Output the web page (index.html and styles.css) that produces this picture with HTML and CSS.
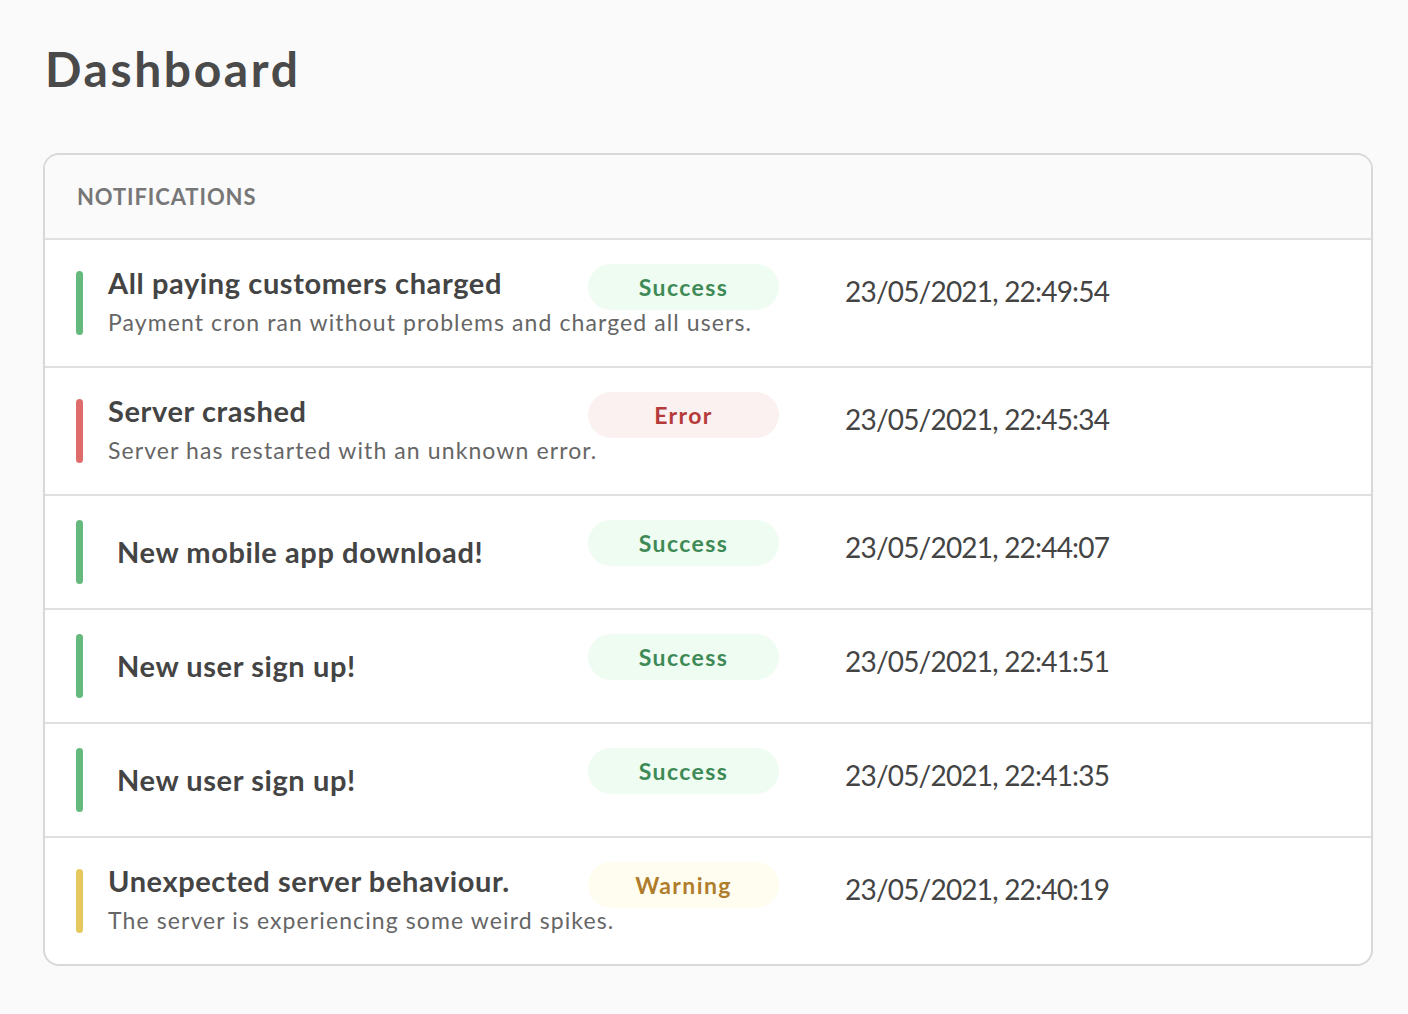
FILE: index.html
```html
<!DOCTYPE html>
<html lang="en">
<head>
    <meta charset="utf-8"/>
    <meta name="viewport" content="width=device-width, initial-scale=1.0"/>
    <title>Dashboard</title>
    <link rel="stylesheet" href="styles.css">
</head>
<body>
<div class="page">
    <h1>Dashboard</h1>

    <div class="card">
        <div class="card-header">Notifications</div>

        <div class="notification">
            <span class="bar success"></span>
            <div class="content">
                <div class="title">All paying customers charged</div>
                <div class="desc">Payment cron ran without problems and charged all users.</div>
            </div>
            <span class="badge success">Success</span>
            <span class="time">23/05/2021, 22:49:54</span>
        </div>

        <div class="notification">
            <span class="bar error"></span>
            <div class="content">
                <div class="title">Server crashed</div>
                <div class="desc">Server has restarted with an unknown error.</div>
            </div>
            <span class="badge error">Error</span>
            <span class="time">23/05/2021, 22:45:34</span>
        </div>

        <div class="notification">
            <span class="bar success"></span>
            <div class="content single">
                <div class="title">New mobile app download!</div>
            </div>
            <span class="badge success">Success</span>
            <span class="time">23/05/2021, 22:44:07</span>
        </div>

        <div class="notification">
            <span class="bar success"></span>
            <div class="content single">
                <div class="title">New user sign up!</div>
            </div>
            <span class="badge success">Success</span>
            <span class="time">23/05/2021, 22:41:51</span>
        </div>

        <div class="notification">
            <span class="bar success"></span>
            <div class="content single">
                <div class="title">New user sign up!</div>
            </div>
            <span class="badge success">Success</span>
            <span class="time">23/05/2021, 22:41:35</span>
        </div>

        <div class="notification">
            <span class="bar warning"></span>
            <div class="content">
                <div class="title">Unexpected server behaviour.</div>
                <div class="desc">The server is experiencing some weird spikes.</div>
            </div>
            <span class="badge warning">Warning</span>
            <span class="time">23/05/2021, 22:40:19</span>
        </div>
    </div>
</div>
</body>
</html>
```

FILE: styles.css
```css
body {
    margin: 0;
    background-color: #fafafa;
    font-family: Lato, "Open Sans", sans-serif;
    color: #444;
}

.page {
    padding: 40px 35px 48px 43px;
}

h1 {
    margin: 0 0 55px 2px;
    font-size: 48px;
    line-height: 58px;
    font-weight: 700;
    letter-spacing: 2.6px;
    color: #4a4a4a;
}

.card {
    border: 2px solid #d8d8d8;
    border-radius: 16px;
    background-color: #fff;
    overflow: hidden;
}

.card-header {
    background-color: #fafafa;
    padding: 29px 32px 28px;
    font-size: 22px;
    line-height: 26px;
    font-weight: 700;
    letter-spacing: 0.9px;
    text-transform: uppercase;
    color: #777;
}

.notification {
    display: flex;
    align-items: flex-start;
    padding: 24px 31px;
    border-top: 2px solid #e0e0e0;
}

.bar {
    flex: none;
    align-self: center;
    width: 7px;
    height: 64px;
    border-radius: 4px;
    margin-right: 25px;
}

.bar.success {
    background-color: #65b97c;
}

.bar.error {
    background-color: #e06b6b;
}

.bar.warning {
    background-color: #e5c95e;
}

.content {
    flex: none;
    width: 480px;
    align-self: center;
}

.content.single {
    width: 471px;
    padding-left: 9px;
}

.title {
    font-size: 29px;
    line-height: 38px;
    font-weight: 700;
    letter-spacing: 0.6px;
    color: #444;
}

.desc {
    font-size: 23px;
    line-height: 40px;
    letter-spacing: 1.1px;
    white-space: nowrap;
    color: #666;
}

.badge {
    flex: none;
    width: 191px;
    height: 46px;
    border-radius: 23px;
    text-align: center;
    font-size: 23px;
    line-height: 46px;
    font-weight: 700;
    letter-spacing: 1.4px;
}

.badge.success {
    background-color: #effcf1;
    color: #3e8a57;
}

.badge.error {
    background-color: #fcf1f1;
    color: #b53a3a;
}

.badge.warning {
    background-color: #fefdef;
    color: #b07d2c;
}

.time {
    margin-left: 66px;
    font-size: 28px;
    line-height: 54px;
    letter-spacing: -0.8px;
    color: #444;
}
```
